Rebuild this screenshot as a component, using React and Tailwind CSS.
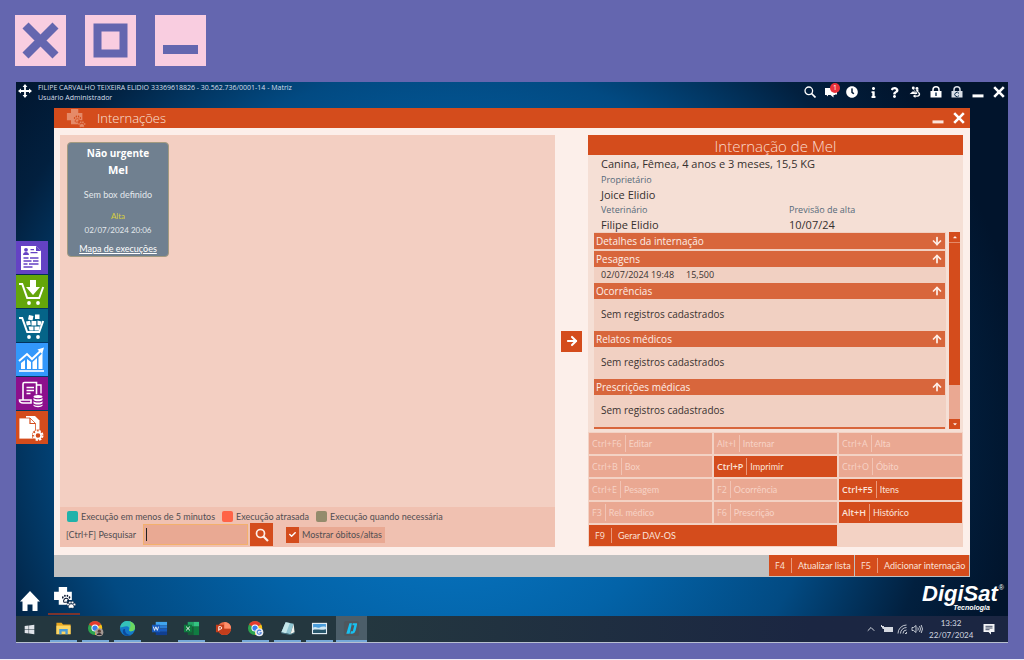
import { useState } from "react"
import clsx from "clsx"
import { FaClock, FaInfo, FaQuestion, FaCheck, FaWindows, FaCaretUp, FaCaretDown } from "react-icons/fa"
import { ArrowUp, ArrowDown, ArrowRight, ChevronUp } from "lucide-react"

const LEGEND = [
  { label: "Execução em menos de 5 minutos", color: "bg-[#20b2aa]" },
  { label: "Execução atrasada", color: "bg-[#ff6347]" },
  { label: "Execução quando necessária", color: "bg-[#948b6c]" },
]

const ACTIONS = [
  { keys: "Ctrl+F6", label: "Editar" },
  { keys: "Alt+I", label: "Internar" },
  { keys: "Ctrl+A", label: "Alta" },
  { keys: "Ctrl+B", label: "Box" },
  { keys: "Ctrl+P", label: "Imprimir", active: true },
  { keys: "Ctrl+O", label: "Óbito" },
  { keys: "Ctrl+E", label: "Pesagem" },
  { keys: "F2", label: "Ocorrência" },
  { keys: "Ctrl+F5", label: "Itens", active: true },
  { keys: "F3", label: "Rel. médico" },
  { keys: "F6", label: "Prescrição" },
  { keys: "Alt+H", label: "Histórico", active: true },
]

function MoveIcon() {
  return (
    <svg viewBox="0 0 14 14" className="size-[14px]" fill="currentColor">
      <path d="M7 0 9.4 3H7.9v3.1H11V4.6L14 7l-3 2.4V7.9H7.9V11h1.5L7 14l-2.4-3h1.5V7.9H3v1.5L0 7l3-2.4v1.5h3.1V3H4.6z" />
    </svg>
  )
}

function CloseIcon({ className }) {
  return (
    <svg viewBox="0 0 12 12" className={className} stroke="currentColor" strokeWidth="2.6">
      <path d="M1.2 1.2 10.8 10.8M10.8 1.2 1.2 10.8" />
    </svg>
  )
}

function MinimizeIcon({ className }) {
  return (
    <svg viewBox="0 0 12 12" className={className} fill="currentColor">
      <path d="M0.5 8.4h11v3H0.5z" />
    </svg>
  )
}

// cross with a paw print at its lower right corner
function VetIcon({ className, paw }) {
  return (
    <svg viewBox="0 0 22 22" className={className}>
      <path d="M5.5 1h8v4.5H18v8h-4.5V18h-8v-4.5H1v-8h4.5z" fill="currentColor" />
      <g fill={paw}>
        <ellipse cx="9.4" cy="11" rx="0.8" ry="1.1" />
        <ellipse cx="11.4" cy="9.4" rx="0.8" ry="1.1" />
        <ellipse cx="13.8" cy="9.4" rx="0.8" ry="1.1" />
        <ellipse cx="15.8" cy="11" rx="0.8" ry="1.1" />
      </g>
      <path d="M12.6 11.8c1.600 0 2.800 1.800 2.400 3.200-.4 1-1.600.4-2.400.4s-2 .6-2.400-.4c-.4-1.400.8-3.200 2.400-3.200z" fill="none" stroke={paw} strokeWidth="1" />
      <g fill="currentColor" stroke={paw} strokeWidth="0.4">
        <circle cx="14.4" cy="17.600" r="1.200" />
        <circle cx="16.200" cy="15.800" r="1.200" />
        <circle cx="18.600" cy="15.800" r="1.200" />
        <circle cx="20.500" cy="17.600" r="1.200" />
        <path d="M17.400 17.200c1.800 0 3 2 2.600 3.400-.6 1-1.800.4-2.600.4s-2 .6-2.600-.4c-.4-1.400.8-3.400 2.600-3.400z" />
      </g>
    </svg>
  )
}

function PeopleIcon() {
  return (
    <svg viewBox="0 0 14 14" className="size-3" fill="currentColor">
      <circle cx="5" cy="2.400" r="1.700" />
      <circle cx="9.300" cy="2.800" r="1.700" />
      <path d="M4 4h2.200v3.200H11V4H8.400v2zM0.500 9.500 4 6.500h5.500v2.800H0.500z" />
      <path d="M10.500 7c3.500 0 3.500 5.500-.5 5.500H7.500V14L4.500 11.700l3-2.200V11H10c1.800 0 1.800-2.400.5-2.400z" />
    </svg>
  )
}

const RAIL = [
  {
    name: "Cadastros",
    bg: "bg-[#6442c4]",
    icon: (
      <>
        <path d="M4 3h15l5 5v19H4z" fill="#fff" />
        <path d="M19 3v5h5z" fill="#6442c4" />
        <g fill="#6442c4">
          <circle cx="9" cy="6.800" r="1.900" />
          <path d="M6 12c0-4 6-4 6 0zM13.500 6h3.500v1.300h-3.500zM13.500 9h7v1.300h-7z" />
        </g>
        <path d="M6.500 15h5m1.500 0h8.500M6.500 18h8m1.500 0h5.500M6.500 21h4m1.500 0h9.500M6.500 24h9" stroke="#6442c4" strokeWidth="1.300" />
      </>
    ),
  },
  {
    name: "Compras",
    bg: "bg-[#64a60a]",
    icon: (
      <>
        <path d="M2 7h3.200l5 14h12l4-11" fill="none" stroke="#fff" strokeWidth="2" />
        <circle cx="12" cy="26" r="1.900" fill="#fff" />
        <circle cx="21" cy="26" r="1.900" fill="#fff" />
        <path d="M13 3h6v7h4l-7 8-7-8h4z" fill="#fff" />
      </>
    ),
  },
  {
    name: "Vendas",
    bg: "bg-[#056488]",
    icon: (
      <>
        <path d="M2 7h3.200l5 14h12l4-11" fill="none" stroke="#fff" strokeWidth="2" />
        <circle cx="12" cy="26" r="1.900" fill="#fff" />
        <circle cx="21" cy="26" r="1.900" fill="#fff" />
        <path d="M12 4l4.500 1-1 4.500-4.500-1zM18 3.500h4.500V8H18zM9 10.500l4-.8.800 4-4 .8zM14.500 10h4.800v4.500h-4.800zM20.500 9.500l4 1-1 4-3-.5zM11.500 15.500h5v4h-4zM17.500 15.500h5.300l-1 4h-4.300z" fill="#fff" />
      </>
    ),
  },
  {
    name: "Financeiro",
    bg: "bg-[#3398fb]",
    icon: (
      <>
        <path d="M4 18l4-3v9H4zM10 14l4 3v7h-4zM15.500 17l4.500-4v11h-4.500zM21.500 12l4-4v16h-4z" fill="#fff" />
        <path d="M2 26h25" stroke="#fff" strokeWidth="1.600" />
        <path d="M2 16l8-7 5 5L24 5.500" fill="none" stroke="#fff" strokeWidth="2" />
        <path d="M20.500 4.500 27 2.500l-1.800 6.500z" fill="#fff" />
      </>
    ),
  },
  {
    name: "Fiscal",
    bg: "bg-[#8c0f8c]",
    icon: (
      <>
        <path d="M6 21V5q0-1.500 1.500-1.500H19.500v12M2.500 21H14v3H6q-3.500 0-3.500-3z" fill="none" stroke="#fff" strokeWidth="1.600" />
        <path d="M19.500 6H24v8.500M9.500 8.500H17M9.500 11.500H17M9.500 14.500h4" fill="none" stroke="#fff" strokeWidth="1.400" />
        <path d="M15.500 15.500h10.500v12h-10.500z" fill="#8c0f8c" />
        <g fill="#fff">
          <ellipse cx="21" cy="17.600" rx="4.500" ry="1.600" />
          <path d="M16.500 19c1 1.800 8 1.800 9 0v2c-1 1.800-8 1.800-9 0zM16.500 22.200c1 1.800 8 1.800 9 0v2c-1 1.800-8 1.800-9 0zM16.500 25.400c1 1.800 8 1.800 9 0v1.400c-1 1.800-8 1.800-9 0z" />
        </g>
      </>
    ),
  },
  {
    name: "Serviços",
    bg: "bg-[#d44c1c]",
    icon: (
      <>
        <path d="M9 3h9l4.500 4.500V20H9z" fill="#fff" />
        <path d="M2 5h11l5.500 5.500V26H2z" fill="#fff" stroke="#d44c1c" strokeWidth="0.800" />
        <path d="M13 5v5.500h5.500" fill="none" stroke="#d44c1c" strokeWidth="1.200" />
        <circle cx="21" cy="22.500" r="6" fill="#d44c1c" />
        <circle cx="21" cy="22.500" r="4.500" fill="none" stroke="#fff" strokeWidth="2" strokeDasharray="2.200 1.340" />
        <circle cx="21" cy="22.500" r="3.100" fill="none" stroke="#fff" strokeWidth="1.600" />
      </>
    ),
  },
]

function ChromeIcon({ badge }) {
  return (
    <svg viewBox="0 0 18 18" className="size-[17px]">
      <circle cx="8.500" cy="8.500" r="7.500" fill="#2da44f" />
      <path d="M8.500 8.500 2 4.700A7.500 7.500 0 0 1 15 4.700z" fill="#e33b2e" />
      <path d="M8.500 8.500 15 4.700A7.500 7.500 0 0 1 8.500 16z" fill="#fbc116" />
      <circle cx="8.500" cy="8.500" r="3.800" fill="#fff" />
      <circle cx="8.500" cy="8.500" r="2.800" fill="#3b7ded" />
      {badge === "photo" ? (
        <>
          <circle cx="13" cy="13" r="4.300" fill="#a59a94" />
          <circle cx="13" cy="11.800" r="1.700" fill="#5b4038" />
          <path d="M10.400 16c0-3 5.200-3 5.200 0z" fill="#302c34" />
        </>
      ) : (
        <>
          <circle cx="13" cy="13" r="4.300" fill="#e8ecf4" />
          <path d="M14.800 11.600a2.200 2.200 0 1 0 .4 1.800h-2" fill="none" stroke="#4a7dd8" strokeWidth="1.100" />
        </>
      )}
    </svg>
  )
}

const TASKS = [
  {
    name: "Explorador de Arquivos",
    open: true,
    icon: (
      <svg viewBox="0 0 18 18" className="size-[17px]">
        <path d="M1.500 3h5.500l1.500 1.700h8V15h-15z" fill="#e9a820" />
        <path d="M1.500 6h15v9h-15z" fill="#fbd665" />
        <path d="M4.500 15V9.500h9V15h-2.500v-2.800H7V15z" fill="#4a9bd8" />
      </svg>
    ),
  },
  { name: "Chrome", open: true, icon: <ChromeIcon badge="photo" /> },
  {
    name: "Edge",
    open: true,
    icon: (
      <svg viewBox="0 0 18 18" className="size-[17px]">
        <circle cx="9" cy="9" r="8" fill="#1478c8" />
        <path d="M1.200 8C2 3 5.500 1 9 1c5 0 8 3.600 8 7 0 2.600-2 4-4.200 4-1.800 0-2.600-.8-2-1.700.8-1.500-.4-3.700-2.800-3.700-3 0-5.600 1.500-6.800 1.400z" fill="#35c1b8" />
        <path d="M11 1.300c3.800.9 6 3.800 6 6.700 0 2.600-2 4-4.200 4-1.800 0-2.600-.8-2-1.700.7-1.500 2.700-5 .2-9z" fill="#6bd860" />
        <path d="M6.500 9.500c-.8 3.500 2.200 6.800 6.500 6.200-3.800 2.600-9 .6-9-4 0-1.500 1-2.600 2.500-2.200z" fill="#0c4a9c" />
      </svg>
    ),
  },
  {
    name: "Word",
    icon: (
      <svg viewBox="0 0 18 18" className="size-[17px]">
        <path d="M5 2h12v3.500H5z" fill="#41a5ee" />
        <path d="M5 5.500h12V9H5z" fill="#2b7cd3" />
        <path d="M5 9h12v3.500H5z" fill="#185abd" />
        <path d="M5 12.500h12V16H5z" fill="#103f91" />
        <path d="M1 5h8.500v8H1z" fill="#185abd" />
        <path d="M2.500 7l1.200 4 1.500-3.800L6.700 11 8 7" fill="none" stroke="#fff" strokeWidth="0.900" />
      </svg>
    ),
  },
  {
    name: "Excel",
    open: true,
    icon: (
      <svg viewBox="0 0 18 18" className="size-[17px]">
        <path d="M5 2h6v5H5z" fill="#21a366" />
        <path d="M11 2h6v5h-6z" fill="#33c481" />
        <path d="M5 7h6v9H5z" fill="#185c37" />
        <path d="M11 7h6v9h-6z" fill="#107c41" />
        <path d="M1 5h8.500v8H1z" fill="#0e7a3e" />
        <path d="M3.300 7l4 4M7.300 7l-4 4" stroke="#fff" strokeWidth="1" />
      </svg>
    ),
  },
  {
    name: "PowerPoint",
    icon: (
      <svg viewBox="0 0 18 18" className="size-[17px]">
        <circle cx="10" cy="9" r="7" fill="#ed6c47" />
        <path d="M10 9h7a7 7 0 0 1-14 0z" fill="#c43e1c" />
        <path d="M10 2a7 7 0 0 1 7 7h-7z" fill="#ff8f6b" />
        <path d="M1 5h8.500v8H1z" fill="#c43e1c" />
        <path d="M4 11.500V7h1.700a1.300 1.300 0 0 1 0 2.700H4" fill="none" stroke="#fff" strokeWidth="1" />
      </svg>
    ),
  },
  { name: "Chrome (2)", open: true, icon: <ChromeIcon badge="google" /> },
  {
    name: "Bloco de Notas",
    open: true,
    icon: (
      <svg viewBox="0 0 18 18" className="size-[17px]">
        <path d="M7 2.500 15.500 4 12 15 2.500 13z" fill="#8ec5d2" />
        <path d="M7 2.500 11.500 3.300 7.500 14 2.500 13z" fill="#c5e6ea" />
        <path d="M15.500 4 16.500 13 12 15z" fill="#f1f3ee" />
        <path d="M2.500 13 12 15l4.500-2v1L12 16l-9.500-2z" fill="#4d7d8c" />
      </svg>
    ),
  },
  {
    name: "Fotos",
    open: true,
    icon: (
      <svg viewBox="0 0 18 18" className="size-[17px]">
        <path d="M1 3h16v12H1z" fill="#e4eef4" />
        <path d="M2.200 4.200h13.600v9.600H2.200z" fill="#4a9ddb" />
        <path d="M2.200 8c3-2 5 1 7 0s4-1.500 6.600-.5V11H2.200z" fill="#cfe6f2" />
        <path d="M2.200 10.500c3-1 9 .5 13.600-.8v4.100H2.200z" fill="#28566b" />
      </svg>
    ),
  },
  {
    name: "DigiSat",
    open: true,
    current: true,
    icon: (
      <svg viewBox="0 0 18 18" className="size-[17px]">
        <rect x="1" y="1" width="16" height="16" rx="2" fill="#4f565c" />
        <path d="M6.800 3.500h2.700L7 14.500H3.500z" fill="#18c0f0" />
        <path d="M10.300 3.500h4.200q.6 0 .4 1l-1.600 7q-.8 3-3.500 3H7.800L8.400 12h1.200q.8 0 1-1L12 5.500H9.900z" fill="#18c0f0" />
      </svg>
    ),
  },
]

function SectionBar({ title, open }) {
  const Arrow = open ? ArrowUp : ArrowDown
  return (
    <button className="flex h-4 w-full shrink-0 items-center justify-between bg-[#d8663c] px-[2px] text-left text-[10px] leading-4 text-[#fdeee8]">
      {title}
      <Arrow size={12} strokeWidth={3.5} />
    </button>
  )
}

function Section({ title, children }) {
  return (
    <section className="flex shrink-0 flex-col">
      <SectionBar title={title} open />
      {children}
    </section>
  )
}

function EmptySection({ title }) {
  return (
    <Section title={title}>
      <p className="h-8 px-[7px] text-[10px] leading-[30px] text-[#3a3230]">Sem registros cadastrados</p>
    </Section>
  )
}

function ActionButton({ keys, label, active }) {
  return (
    <button
      disabled={!active}
      className={clsx(
        "flex h-[21px] items-center gap-[3px] px-[3px] text-[9px] leading-[21px]",
        active ? "bg-[#d44c1c] text-[#fbe3da]" : "bg-[#eaa892] text-[#f7d3c6]"
      )}
    >
      <span className={active ? "font-semibold" : "font-medium"}>{keys}</span>
      <span className={clsx("h-[17px] w-px", active ? "bg-[#ea9a7c]" : "bg-[#f2c4b4]")} />
      <span className="font-['Lato']">{label}</span>
    </button>
  )
}

function FooterButton({ keys, label, className }) {
  return (
    <button className={clsx("flex items-center bg-[#d44c1c] text-[9px] text-[#fbe3da]", className)}>
      <span className="w-[22px] text-center font-medium">{keys}</span>
      <span className="h-[15px] w-px bg-[#ea9a7c]" />
      <span className="flex-1 pl-[6px] text-left font-['Lato']">{label}</span>
    </button>
  )
}

function TopBar() {
  return (
    <header className="flex h-[26px] items-start text-white">
      <div className="flex flex-1 gap-[6px] pt-[2px] pl-[2px]">
        <MoveIcon />
        <div className="-mt-px text-[7px] leading-[10px] text-[#d5dee8]">
          <p>FILIPE CARVALHO TEIXEIRA ELIDIO 33369618826 - 30.562.736/0001-14 - Matriz</p>
          <p>Usuário Administrador</p>
        </div>
      </div>
      <div className="flex h-5 items-center gap-[3px] *:flex *:w-[18px] *:justify-center">
        <button aria-label="Pesquisar">
          <svg viewBox="0 0 12 12" className="size-3" fill="none" stroke="currentColor">
            <circle cx="4.800" cy="4.800" r="3.800" strokeWidth="1.300" />
            <path d="M7.500 7.500 11.500 11.500" strokeWidth="1.700" />
          </svg>
        </button>
        <button aria-label="Mensagens" className="relative">
          <svg viewBox="0 0 12 12" className="size-3" fill="currentColor">
            <path d="M0 2h10v7H8.500v2.500L5.500 9H3v1.500L1.500 9H0zM8 4h4v4.500h-2z" />
          </svg>
          <span className="absolute -top-[3px] left-2 size-[10px] rounded-full bg-[#e8303a] text-center text-[7px] leading-[10px]">
            1
          </span>
        </button>
        <button aria-label="Relógio">
          <FaClock size={12} />
        </button>
        <button aria-label="Informações">
          <FaInfo size={11} />
        </button>
        <button aria-label="Ajuda">
          <FaQuestion size={11} />
        </button>
        <button aria-label="Usuários">
          <PeopleIcon />
        </button>
        <button aria-label="Bloquear">
          <svg viewBox="0 0 12 12" className="size-3">
            <path d="M3 6V3.800a3 3 0 0 1 6 0V6" fill="none" stroke="#fff" strokeWidth="1.500" />
            <path d="M0.500 5h11v6.500H0.500z" fill="#fff" />
            <path d="M5.300 6.500h1.400v3.500H5.300z" fill="#0a2a4a" />
          </svg>
        </button>
        <button aria-label="Trocar usuário">
          <svg viewBox="0 0 12 12" className="size-3">
            <path d="M3 6V3.800a3 3 0 0 1 6 0V6" fill="none" stroke="#d8dee6" strokeWidth="1.500" />
            <path d="M0.500 5h11v6.500H0.500z" fill="#d8dee6" />
            <path d="M8 7.500A2.200 2.200 0 1 0 8 9.500" fill="none" stroke="#0a2a4a" />
          </svg>
        </button>
        <button aria-label="Minimizar sistema">
          <MinimizeIcon className="size-3" />
        </button>
        <button aria-label="Fechar sistema">
          <CloseIcon className="size-3" />
        </button>
      </div>
    </header>
  )
}

function PatientCard() {
  return (
    <article className="flex h-[115px] w-[102px] flex-col items-center rounded border border-[#a39a80] bg-[#708090] text-center font-['Lato'] text-[#e3e8ec]">
      <h2 className="mt-[2px] font-['Open_Sans'] text-[10px] leading-4 font-bold text-white">Não urgente</h2>
      <h3 className="font-['Open_Sans'] text-[11px] leading-[18px] font-bold text-white">Mel</h3>
      <p className="mt-2 text-[9px] leading-4">Sem box definido</p>
      <p className="mt-[6px] text-[8px] leading-[14px] text-[#d8cf3c]">Alta</p>
      <p className="text-[8px] leading-[14px]">02/07/2024 20:06</p>
      <a href="#mapa" className="mt-1 text-[9px] leading-4 text-white underline">
        Mapa de execuções
      </a>
    </article>
  )
}

function ListPanel() {
  const [search, setSearch] = useState("")
  const [showAll, setShowAll] = useState(true)

  return (
    <section className="flex flex-[495] flex-col bg-[#f3cfc2]">
      <div className="flex-1 p-[7px]">
        <PatientCard />
      </div>

      <div className="bg-[#f0c1b1] px-[6px] pt-[3px] pb-px font-['Lato'] text-[9px] text-[#504e52]">
        <ul className="flex gap-[7px] pl-px leading-[13px]">
          {LEGEND.map((item) => (
            <li key={item.label} className="flex items-center gap-[3px]">
              <span className={clsx("size-[11px] rounded-xs", item.color)} />
              {item.label}
            </li>
          ))}
        </ul>
        <div className="flex h-[23px] items-center">
          <label htmlFor="search" className="w-[77px]">
            [Ctrl+F] Pesquisar
          </label>
          <div className="relative">
            <input
              id="search"
              value={search}
              onChange={(e) => setSearch(e.target.value)}
              className="block h-[21px] w-[105px] border border-[#f3b06c] bg-[#e9a993] px-1 outline-none"
            />
            <span className="absolute top-1 left-[3px] h-[13px] w-px bg-[#202020]" />
          </div>
          <button aria-label="Buscar" className="ml-[2px] flex size-[23px] items-center justify-center bg-[#d44c1c] text-[#fdeee8]">
            <svg viewBox="0 0 14 14" className="size-[14px]" fill="none" stroke="currentColor">
              <circle cx="5.500" cy="5.500" r="4" strokeWidth="1.700" />
              <path d="M8.500 8.500 13 13" strokeWidth="2.200" />
            </svg>
          </button>
          <label className="ml-[13px] flex h-4 items-center gap-[3px] bg-[#e9a993] pr-[3px]">
            <span className="relative flex">
              <input
                type="checkbox"
                checked={showAll}
                onChange={(e) => setShowAll(e.target.checked)}
                className="h-4 w-[13px] appearance-none bg-[#d44c1c]"
              />
              {showAll && <FaCheck size={7} className="pointer-events-none absolute top-1 left-[3px] text-white" />}
            </span>
            Mostrar óbitos/altas
          </label>
        </div>
      </div>
    </section>
  )
}

function DetailPanel() {
  return (
    <section className="flex flex-[375] flex-col bg-[#f5dfd5]">
      <h2 className="h-5 bg-[#d44c1c] text-center text-[15px] leading-[23px] font-light text-[#fbdccf]">Internação de Mel</h2>

      <div className="h-[77px] px-[13px] pt-px text-[11px] leading-4 text-[#35302e]">
        <p>Canina, Fêmea, 4 anos e 3 meses, 15,5 KG</p>
        <dl className="grid grid-cols-[188px_1fr] *:[&>dd]:leading-[15px] *:[&>dt]:text-[9px] *:[&>dt]:leading-[15px] *:[&>dt]:text-[#566a7a]">
          <div className="col-span-2">
            <dt>Proprietário</dt>
            <dd>Joice Elidio</dd>
          </div>
          <div>
            <dt>Veterinário</dt>
            <dd>Filipe Elidio</dd>
          </div>
          <div>
            <dt>Previsão de alta</dt>
            <dd>10/07/24</dd>
          </div>
        </dl>
      </div>

      <div className="flex h-[200px] flex-auto gap-[3px] pr-[3px] pl-[6px]">
        <div className="flex h-[197px] flex-1 flex-col overflow-hidden bg-[#f1d0c2] pt-px pr-px">
          <div className="mb-[2px] shrink-0">
            <SectionBar title="Detalhes da internação" />
          </div>
          <Section title="Pesagens">
            <p className="flex h-4 gap-3 px-[7px] text-[9px] leading-4 text-[#3a3230]">
              <span>02/07/2024 19:48</span>
              <span>15,500</span>
            </p>
          </Section>
          <EmptySection title="Ocorrências" />
          <EmptySection title="Relatos médicos" />
          <EmptySection title="Prescrições médicas" />
          <div className="h-4 bg-[#d8663c]" />
        </div>
        <div className="flex h-[197px] w-[11px] flex-col bg-[#eaa892] text-[#fdeee8]">
          <button aria-label="Rolar para cima" className="flex h-[11px] items-center justify-center border-b border-[#e58a68] bg-[#d44c1c]">
            <FaCaretUp size={6} />
          </button>
          <div className="h-[142px] bg-[#d44c1c]" />
          <button aria-label="Rolar para baixo" className="mt-auto flex h-[10px] items-center justify-center bg-[#d44c1c]">
            <FaCaretDown size={6} />
          </button>
        </div>
      </div>

      <div className="grid grid-cols-3 gap-[2px] bg-[#f3d2c4] p-px">
        {ACTIONS.map((action) => (
          <ActionButton key={action.keys} {...action} />
        ))}
        <FooterButton keys="F9" label="Gerar DAV-OS" className="col-span-2 h-[21px]" />
      </div>
    </section>
  )
}

function InternacoesWindow() {
  return (
    <main className="flex flex-1 flex-col bg-[#fcefea]">
      <div className="flex h-5 items-center bg-[#d44c1c] pr-[5px] pl-3 text-[#fbe3da]">
        <VetIcon className="size-5 text-[#e58a68]" paw="#d44c1c" />
        <h1 className="flex-1 pl-[11px] text-[13px] leading-5 font-light">Internações</h1>
        <button aria-label="Minimizar janela" className="mr-[9px]">
          <MinimizeIcon className="size-3" />
        </button>
        <button aria-label="Fechar janela">
          <CloseIcon className="size-3 text-white" />
        </button>
      </div>

      <div className="flex flex-1 py-2 pt-[7px] pr-[7px] pl-[6px]">
        <ListPanel />
        <div className="flex w-[33px] items-center justify-center">
          <button aria-label="Avançar" className="flex size-[21px] items-center justify-center bg-[#d44c1c] text-white">
            <ArrowRight size={14} strokeWidth={3.5} />
          </button>
        </div>
        <DetailPanel />
      </div>

      <footer className="flex h-[22px] justify-end gap-px bg-[#c0c0c0] pr-px pb-px">
        <FooterButton keys="F4" label="Atualizar lista" className="w-[85px]" />
        <FooterButton keys="F5" label="Adicionar internação" className="w-[114px]" />
      </footer>
    </main>
  )
}

function Dock() {
  return (
    <div className="flex h-[39px] items-end justify-between text-white">
      <div className="flex h-full items-end">
        <button aria-label="Início" className="flex h-full w-8 items-center justify-center pt-2 pr-1">
          <svg viewBox="0 0 20 20" className="size-5" fill="currentColor">
            <path d="M10 0 20 10.500h-2.500V20H12.500v-6.500h-5V20h-5v-9.500H0z" />
          </svg>
        </button>
        <button aria-label="Internações" className="mb-px flex h-[29px] w-8 justify-center border-b-2 border-[#7c342c]">
          <VetIcon className="size-[23px]" paw="#04142e" />
        </button>
      </div>
      <div className="flex gap-px pr-1 pb-1 font-['Liberation_Sans'] italic">
        <div className="flex flex-col items-end">
          <span className="text-[22px] leading-5 font-bold">DigiSat</span>
          <span className="pr-2 text-[7px] leading-2 font-bold">Tecnologia</span>
        </div>
        <span className="text-[7px] leading-2 not-italic">®</span>
      </div>
    </div>
  )
}

function Taskbar() {
  return (
    <nav className="flex h-[26px] items-stretch bg-linear-to-r from-[#24373f] from-35% to-[#1b2642] to-80% text-[#e0e4ea]">
      <button aria-label="Iniciar" className="flex w-[34px] items-center justify-center pr-[7px]">
        <FaWindows size={11} />
      </button>
      <div className="flex gap-[5px]">
        {TASKS.map((task) => (
          <button
            key={task.name}
            aria-label={task.name}
            className={clsx(
              "flex w-[27px] items-center justify-center border-b-2",
              task.open ? "border-[#76a9d8]" : "border-transparent",
              task.current && "-mx-[2px] box-content bg-[#4c5e69] px-[2px]"
            )}
          >
            {task.icon}
          </button>
        ))}
      </div>
      <div className="ml-auto flex items-center gap-1 pr-[13px] text-[#d4d8e0]">
        <ChevronUp size={12} />
        <svg viewBox="0 0 12 8" className="h-2 w-3" fill="currentColor">
          <path d="M1 1h2v1h9v5H3V4H2L1 3zM0 0h1v2H0z" />
        </svg>
        <svg viewBox="0 0 10 10" className="size-[10px]" fill="none" stroke="currentColor" strokeWidth="0.900">
          <path d="M1 9.500A8.500 8.500 0 0 1 9.500 1M3.500 9.500a6 6 0 0 1 6-6M6 9.500A3.500 3.500 0 0 1 9.500 6M8 9.500h1.500V8" />
        </svg>
        <svg viewBox="0 0 12 10" className="h-[10px] w-3" fill="none" stroke="currentColor" strokeWidth="0.900">
          <path d="M1 3.500h1.500L5 1.500v7L2.500 6.500H1zM6.800 3.500q1 1.500 0 3M8.500 2q2 3 0 6M10.200 1q2.600 4 0 8" />
        </svg>
        <div className="ml-[2px] w-11 text-center font-['Lato'] text-[8px] leading-3">
          <p>13:32</p>
          <p>22/07/2024</p>
        </div>
        <svg viewBox="0 0 12 12" className="ml-[6px] size-3">
          <path d="M0.500 1h11v8H8v2.500L5.500 9h-5z" fill="#f2f4f7" />
          <path d="M2.500 3.300h7M2.500 5h7M2.500 6.700h4" stroke="#1b2642" strokeWidth="0.800" />
        </svg>
      </div>
    </nav>
  )
}

export default function App() {
  return (
    <div className="flex min-h-screen flex-col border-b-3 border-[#eceaf6] bg-[#6466af] px-4 pt-[15px] pb-4 font-['Open_Sans','Noto_Sans',sans-serif]">
      {/* Frame buttons */}
      <div className="-ml-px flex gap-[19px] *:size-[51px] *:bg-[#f9cde0] *:text-[#6466af]">
        <button aria-label="Fechar">
          <svg viewBox="0 0 51 51" stroke="currentColor" strokeWidth="8.500">
            <path d="M10.500 10.500 40.500 40.500M40.500 10.500 10.500 40.500" />
          </svg>
        </button>
        <button aria-label="Maximizar">
          <svg viewBox="0 0 51 51" fill="none" stroke="currentColor" strokeWidth="8">
            <path d="M12.500 12.500h26v26h-26z" />
          </svg>
        </button>
        <button aria-label="Minimizar">
          <svg viewBox="0 0 51 51" fill="currentColor">
            <path d="M8 30h35v9H8z" />
          </svg>
        </button>
      </div>

      {/* Desktop */}
      <div className="mt-4 flex flex-1 flex-col border-b border-[#b8c0d0] bg-[radial-gradient(ellipse_58%_100%_at_44%_62%,#0a80d0_0%,#0363a8_40%,#024a82_65%,#02203f_85%,#01142c_100%)]">
        <TopBar />
        <div className="flex flex-1 pr-[38px]">
          <aside className="mr-[6px] flex w-8 flex-col justify-center gap-px">
            {RAIL.map((item) => (
              <button key={item.name} aria-label={item.name} className={clsx("h-[33px] w-8 p-px", item.bg)}>
                <svg viewBox="0 0 30 30" className="size-[30px]">
                  {item.icon}
                </svg>
              </button>
            ))}
          </aside>
          <InternacoesWindow />
        </div>
        <Dock />
        <Taskbar />
      </div>
    </div>
  )
}
